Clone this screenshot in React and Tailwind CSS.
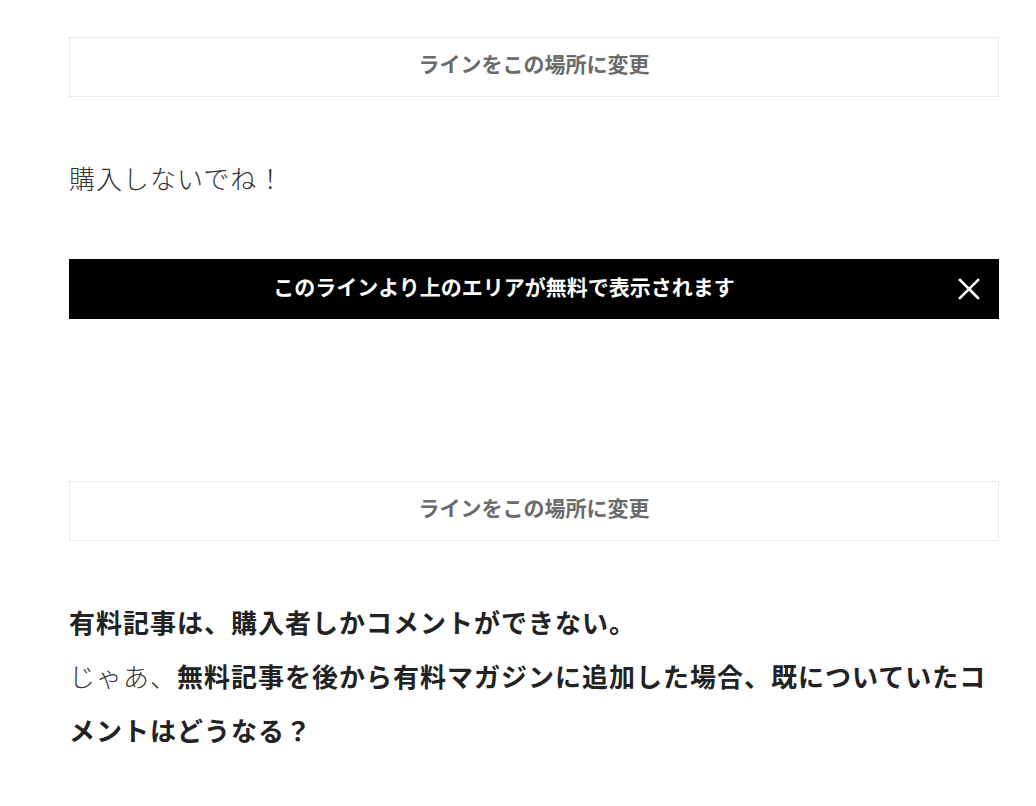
import React from "react";

const jp = { fontFamily: '"Noto Sans CJK JP", "Noto Sans", sans-serif' };

const ChangeLine = () => (
  <div className="h-[60px] border border-dotted border-[#d9d9d9] flex items-center justify-center pb-[7px]">
    <span className="text-[21px] font-bold text-[#6b6b6b] leading-none">ラインをこの場所に変更</span>
  </div>
);

const CloseIcon = () => (
  <svg width="22" height="22" viewBox="0 0 22 22" fill="none">
    <path d="M2 2L20 20M20 2L2 20" stroke="#fff" strokeWidth="2.6" strokeLinecap="square" />
  </svg>
);

export default function App() {
  return (
    <div className="bg-white min-h-[806px] text-[#222]" style={jp}>
      <div className="ml-[69px] w-[930px] pt-[37px] pb-[40px]">
        <ChangeLine />

        <p className="mt-[54px] text-[26px] leading-[54px] font-light tracking-[1px] text-[#333]">購入しないでね！</p>

        <div className="mt-[54px] h-[60px] bg-black flex items-center">
          <div className="flex-1 text-center text-white font-bold text-[21px] leading-none pb-[5px]">
            このラインより上のエリアが無料で表示されます
          </div>
          <div className="w-[60px] flex items-center justify-center">
            <CloseIcon />
          </div>
        </div>

        <div className="mt-[162px]">
          <ChangeLine />
        </div>

        <div className="mt-[54px] text-[26px] leading-[54px] tracking-[1px]">
          <p className="font-bold">有料記事は、購入者しかコメントができない。</p>
          <p>
            <span className="font-light text-[#333]">じゃあ、</span>
            <span className="font-bold">無料記事を後から有料マガジンに追加した場合、既についていたコメントはどうなる？</span>
          </p>
        </div>
      </div>
    </div>
  );
}
